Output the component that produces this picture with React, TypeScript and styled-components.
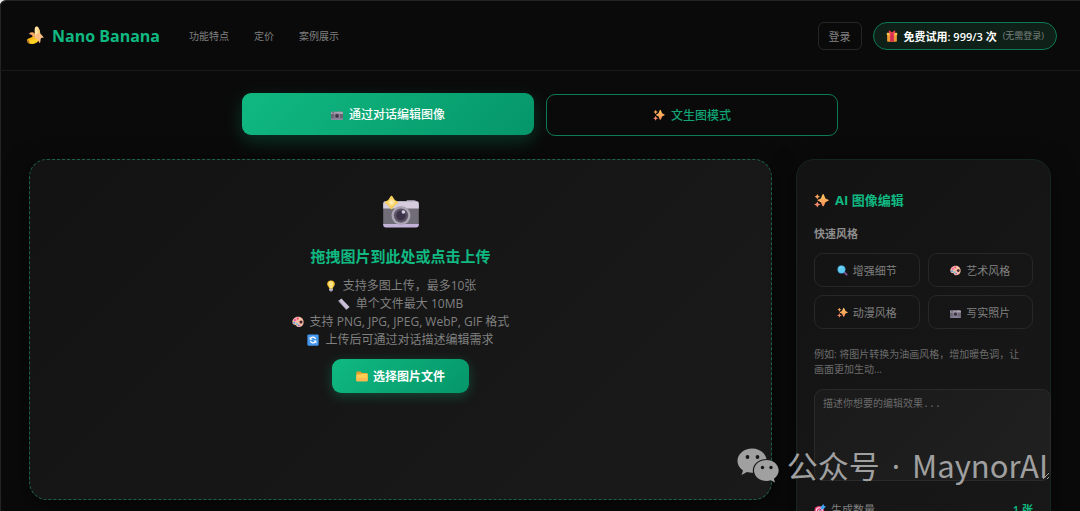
import React from "react";
import styled, { createGlobalStyle, css } from "styled-components";

const Global = createGlobalStyle`
  * { box-sizing: border-box; }
  html { background: #e8e8e8; }
  body { margin: 0; }
  body, button { font-family: "Open Sans", "Noto Sans CJK SC", sans-serif; }
  h1, h2, h3, p, ul { margin: 0; padding: 0; }
`;

const Shell = styled.div`
  position: relative;
  height: 100vh;
  overflow: hidden;
  background: #0a0a0a;
  border-top: 1px solid #242424;
  box-shadow: inset 1px 0 #242424;
  border-top-left-radius: 6px;
  color: #808080;
`;

const Header = styled.header`
  display: flex;
  align-items: center;
  justify-content: space-between;
  height: 70px;
  padding: 0 23px 0 26px;
  border-bottom: 1px solid #1a1a1a;
`;

const HeaderGroup = styled.div<{ $gap: number }>`
  display: flex;
  align-items: center;
  gap: ${(p) => p.$gap}px;
`;

const Logo = styled.h1`
  display: flex;
  align-items: center;
  gap: 7px;
  font-size: 16px;
  line-height: 24px;
  font-weight: 700;
  color: #10b981;
`;

const Nav = styled.nav`
  display: flex;
  gap: 25px;
`;

const NavLink = styled.a`
  font-size: 10px;
  line-height: 16px;
  color: #808080;
  text-decoration: none;
`;

const LoginButton = styled.button`
  height: 28px;
  padding: 0 10px;
  border: 1px solid #262626;
  border-radius: 6px;
  background: transparent;
  color: #808080;
  font-size: 11px;
`;

const TrialBadge = styled.div`
  display: flex;
  align-items: center;
  gap: 6px;
  height: 28px;
  padding: 0 12px;
  border: 1px solid #0d7a57;
  border-radius: 14px;
  background: #0e2018;
  color: #fff;
  font-size: 11px;
  font-weight: 600;
`;

const TrialNote = styled.span`
  font-size: 9px;
  font-weight: 400;
  color: #7a807d;
`;

const ModeSwitch = styled.div`
  display: grid;
  grid-template-columns: 1fr 1fr;
  gap: 12px;
  max-width: 596px;
  margin: 23px auto 0;
`;

const greenFill = css`
  background: linear-gradient(135deg, #10b981, #059669);
  color: #fff;
  border: 0;
`;

const ModeButton = styled.button<{ $active?: boolean }>`
  display: flex;
  align-items: center;
  justify-content: center;
  gap: 6px;
  height: 42px;
  border-radius: 9px;
  border: 1px solid #0d7a57;
  background: transparent;
  color: #10a574;
  font-size: 12px;
  font-weight: 500;
  ${(p) =>
    p.$active &&
    css`
      ${greenFill}
      transform: translateY(-1px);
      box-shadow: 0 6px 18px rgba(16, 185, 129, 0.25);
    `}
`;

const Main = styled.main`
  display: grid;
  grid-template-columns: minmax(0, 1fr) 255px;
  align-items: start;
  gap: 24px;
  padding: 23px 29px 0;
`;

const UploadPanel = styled.section`
  display: flex;
  flex-direction: column;
  align-items: center;
  min-height: 341px;
  padding: 33px 24px;
  border: 1px dashed #1a6148;
  border-radius: 18px;
  background: linear-gradient(135deg, #131313, #1a1a1a);
  box-shadow: 0 6px 24px rgba(0, 0, 0, 0.5);
`;

const UploadTitle = styled.h2`
  margin-top: 15px;
  font-size: 15px;
  line-height: 20px;
  font-weight: 600;
  color: #10b981;
`;

const Tips = styled.ul`
  margin-top: 11px;
  list-style: none;
  font-size: 12px;
  line-height: 18px;
`;

const Tip = styled.li`
  display: flex;
  align-items: center;
  justify-content: center;
  gap: 6px;
`;

const PickButton = styled.button`
  ${greenFill}
  display: flex;
  align-items: center;
  gap: 5px;
  height: 34px;
  margin-top: 10px;
  padding: 0 24px;
  border-radius: 9px;
  font-size: 12px;
  font-weight: 600;
  box-shadow: 0 3px 12px rgba(16, 185, 129, 0.3);
`;

const Sidebar = styled.aside`
  padding: 30px 17px;
  border: 1px solid #14261f;
  border-radius: 18px;
  background: linear-gradient(135deg, #131313, #181818);
  box-shadow: 0 6px 24px rgba(0, 0, 0, 0.5);
`;

const SideTitle = styled.h2`
  display: flex;
  align-items: center;
  gap: 6px;
  font-size: 13px;
  line-height: 20px;
  font-weight: 700;
  color: #10b981;
`;

const SideLabel = styled.h3`
  margin-top: 16px;
  font-size: 11px;
  line-height: 16px;
  font-weight: 600;
  color: #8c8c8c;
`;

const StyleGrid = styled.div`
  display: grid;
  grid-template-columns: 1fr 1fr;
  gap: 8px;
  margin-top: 11px;
`;

const StyleButton = styled.button`
  display: flex;
  align-items: center;
  justify-content: center;
  gap: 5px;
  height: 34px;
  border: 1px solid #272727;
  border-radius: 9px;
  background: transparent;
  color: #808080;
  font-size: 11px;
`;

const Hint = styled.p`
  margin-top: 18px;
  padding-right: 8px;
  font-size: 10px;
  line-height: 15px;
  color: #6c6c6c;
`;

const Prompt = styled.textarea`
  display: block;
  width: calc(100% + 18px);
  height: 92px;
  margin-top: 12px;
  padding: 8px;
  border: 1px solid #2a2a2a;
  border-radius: 9px;
  background: linear-gradient(135deg, #1a1a1a, #202020);
  color: #ccc;
  font-family: "Liberation Mono", "Noto Sans CJK SC", monospace;
  font-size: 10px;
  line-height: 14px;
  &::placeholder { color: #6a6a6a; }
`;

const CountRow = styled.div`
  display: flex;
  align-items: center;
  justify-content: space-between;
  margin-top: 21px;
  font-size: 11px;
  line-height: 16px;
`;

const CountName = styled.span`
  display: flex;
  align-items: center;
  gap: 5px;
`;

const CountValue = styled.strong`
  font-weight: 600;
  color: #10b981;
`;

const Watermark = styled.div`
  position: absolute;
  right: 32px;
  bottom: 21px;
  display: flex;
  align-items: center;
  gap: 8px;
  color: #a0a0a0;
  font-family: "Noto Sans CJK SC", sans-serif;
  font-size: 31px;
  line-height: 48px;
  white-space: nowrap;
  pointer-events: none;
`;

const Dot = styled.span`
  padding: 0 5px;
  font-family: "Noto Sans", sans-serif;
`;

type IconProps = { size: number };

const Svg = ({ size, children }: IconProps & { children: React.ReactNode }) => (
  <svg width={size} height={size} viewBox="0 0 32 32" aria-hidden="true">
    {children}
  </svg>
);

const Banana = ({ size }: IconProps) => (
  <Svg size={size}>
    <path d="M15 12C14 17 9 19 4 21c-3 1-3 6 0 8 6 3 16 1 20-9z" fill="#f9b917" />
    <path d="M4 24c7 1 13-1 17-7l2 4C19 29 10 31 4 28z" fill="#ffd226" />
    <path d="M2 25l3-1 1 4-3 0z" fill="#a4632e" />
    <path d="M15 3c1-3 5-3 6 0 3 5 4 12 2 17l-8-3c0-5-1-9 0-14z" fill="#ffe2a0" />
    <path d="M20 2c4 4 5 12 3 18l-4-3c1-5 2-10 1-15z" fill="#f6c878" />
    <path d="M15 13c-4-4-9-3-10 1 4-1 6 3 9 6z" fill="#f5a867" />
    <path d="M21 12c4 0 7 4 9 8-3 0-4-1-5 1s0 6-2 8c-2-3-2-7-8-8-1-4 2-8 6-9z" fill="#f9bd83" />
  </Svg>
);

const Gift = ({ size }: IconProps) => (
  <Svg size={size}>
    <path d="M10 8C5 5 7 0 11 2l5 5 5-5c4-2 6 3 1 6z" fill="#e5344f" />
    <rect x="3" y="8" width="26" height="23" rx="2" fill="#ed9b35" />
    <rect x="2" y="7" width="28" height="7" rx="2" fill="#ffc54a" />
    <rect x="11" y="7" width="10" height="24" fill="#d62d55" />
    <path d="M8 6l7 2-4 7zM24 6l-7 2 4 7z" fill="#f34855" />
  </Svg>
);

const CameraBody = () => (
  <>
    <path d="M21 6h6a2 2 0 012 2H20z" fill="#b9b2c4" />
    <rect x="1" y="7" width="30" height="21" rx="2" fill="#706c78" />
    <path d="M3 7h26a2 2 0 012 2v4H1V9a2 2 0 012-2z" fill="#d5cddd" />
    <path d="M1 26h30v1a2 2 0 01-2 2H3a2 2 0 01-2-2z" fill="#c4b2d8" />
    <circle cx="16" cy="19" r="8" fill="#aaa4b3" />
    <circle cx="16" cy="19" r="6" fill="#5c5366" />
    <circle cx="16" cy="19" r="4" fill="#3d3349" />
    <circle cx="18" cy="16" r="1.5" fill="#d8d2e4" />
  </>
);

const Camera = ({ size }: IconProps) => (
  <Svg size={size}>
    <path d="M20 9h8v3h-8z" fill="#8e8799" />
    <rect x="0" y="10" width="32" height="21" rx="2" fill="#6b6673" />
    <path d="M2 10h28a2 2 0 012 2v4H0v-4a2 2 0 012-2z" fill="#a9a2b3" />
    <path d="M0 28h32v1a2 2 0 01-2 2H2a2 2 0 01-2-2z" fill="#9c8fae" />
    <circle cx="16" cy="21" r="8" fill="#8d8698" />
    <circle cx="16" cy="21" r="5" fill="#3d3349" />
    <rect x="3" y="11" width="6" height="3" rx="1" fill="#625b6c" />
  </Svg>
);

const FlashCamera = ({ size }: IconProps) => (
  <Svg size={size}>
    <defs>
      <radialGradient id="flash">
        <stop offset="0" stopColor="#fff5cf" />
        <stop offset="1" stopColor="#f8ca4b" />
      </radialGradient>
    </defs>
    <CameraBody />
    <path
      d="M8 3Q9.500 6.500 13 8 9.500 9.500 8 13 6.500 9.500 3 8 6.500 6.500 8 3z"
      fill="url(#flash)"
      stroke="#f8cf5c"
      strokeWidth="1.500"
      strokeLinejoin="round"
    />
    <path d="M8 4l4 4-4 4-4-4z" fill="url(#flash)" />
  </Svg>
);

const Sparkles = ({ size }: IconProps) => (
  <Svg size={size}>
    <defs>
      <linearGradient id="spark" x1="0" y1="0" x2="0" y2="1">
        <stop offset="0" stopColor="#ffc95a" />
        <stop offset="1" stopColor="#f98c5c" />
      </linearGradient>
    </defs>
    <path d="M19.500 2q1.200 0 1.800 2l2.700 6.500q.4 1 1.500 1.500l5 2.500q2 1 0 2l-5 2.500q-1.100.5-1.500 1.500l-2.700 6.500q-1.800 3-3.600 0l-2.700-6.500q-.4-1-1.500-1.500l-5-2.500q-2-1 0-2l5-2.500q1.100-.5 1.500-1.500l2.700-6.500Q18.300 2 19.500 2z" fill="url(#spark)" />
    <path d="M7 2l2 4 4 1.800-4 2L7 14 5 9.800 1 7.800 5 6z" fill="#f9a35c" />
    <path d="M7 18l2.200 4.500L14 24.500l-4.800 2L7 31l-2.200-4.500L0 24.500l4.800-2z" fill="#f58a68" />
  </Svg>
);

const Bulb = ({ size }: IconProps) => (
  <Svg size={size}>
    <path d="M16 1C9 1 5 6 6 12c1 5 5 6 5 11h10c0-5 4-6 5-11C27 6 23 1 16 1z" fill="#ffc83b" />
    <path d="M15 4C11 4 9 8 10 12s4 6 4 10h4c0-6 4-8 3-13-1-3-3-5-6-5z" fill="#ffe58a" />
    <path d="M11 23h10v5q-5 6-10 0z" fill="#a49bad" />
    <path d="M11 25h10" stroke="#d9d2e2" strokeWidth="2" />
  </Svg>
);

const Ruler = ({ size }: IconProps) => (
  <Svg size={size}>
    <path d="M9 1L1 8l21 23 9-7z" fill="#cbc2d8" />
    <path d="M1 8l21 23v-2L2 6z" fill="#8e849e" />
    <path d="M11 4L9 6M15 8l-3 3M19 12l-2 2M23 17l-3 3M27 21l-2 2" stroke="#a79db6" strokeWidth="1" />
  </Svg>
);

const Palette = ({ size }: IconProps) => (
  <Svg size={size}>
    <path d="M16 2C7 2 1 9 1 16c0 6 4 8 8 8 3 0 2 2 4 4 3 3 18 3 18-12C31 8 25 2 16 2z" fill="#f7b9a4" />
    <ellipse cx="24" cy="16" rx="4" ry="4" fill="#3c2426" />
    <circle cx="15" cy="7" r="2.800" fill="#f0447a" />
    <circle cx="8" cy="11" r="2.800" fill="#f04fb0" />
    <circle cx="6" cy="18" r="2.500" fill="#3c9be9" />
    <circle cx="13" cy="21" r="2.500" fill="#49c6dd" />
    <circle cx="18" cy="25" r="2.500" fill="#8b6be0" />
    <circle cx="22" cy="8" r="2" fill="#ffdf91" />
  </Svg>
);

const Refresh = ({ size }: IconProps) => (
  <Svg size={size}>
    <rect x="1" y="1" width="30" height="30" rx="3" fill="#4597ee" />
    <g fill="none" stroke="#fff" strokeWidth="3">
      <path d="M23 13c-3-6-10-6-13-2M9 19c3 6 10 6 13 2" />
    </g>
    <path d="M7 7v8h8zM25 25v-8h-8z" fill="#fff" />
  </Svg>
);

const Folder = ({ size }: IconProps) => (
  <Svg size={size}>
    <path d="M1 6a2 2 0 012-2h9l4 4h13a2 2 0 012 2v17H1z" fill="#e9a02c" />
    <path d="M1 12l12-1 3-1h15v18a2 2 0 01-2 2H3a2 2 0 01-2-2z" fill="#ffce52" />
    <path d="M1 21h30v7a2 2 0 01-2 2H3a2 2 0 01-2-2z" fill="#fcb952" />
  </Svg>
);

const Magnifier = ({ size }: IconProps) => (
  <Svg size={size}>
    <path d="M20 20l8 8" stroke="#7f4b8f" strokeWidth="6" strokeLinecap="round" />
    <circle cx="13" cy="13" r="12" fill="#3a93c4" />
    <circle cx="13" cy="13" r="10" fill="#5ecbf3" />
    <path d="M7 10q3-5 8-4" stroke="#9ee5fb" strokeWidth="2" fill="none" />
  </Svg>
);

const Target = ({ size }: IconProps) => (
  <Svg size={size}>
    <circle cx="14" cy="18" r="13" fill="#e93e70" />
    <circle cx="14" cy="18" r="9.500" fill="#f6dce8" />
    <circle cx="14" cy="18" r="6.500" fill="#e93e70" />
    <circle cx="14" cy="18" r="3" fill="#f6dce8" />
    <path d="M14 18L24 8" stroke="#35529b" strokeWidth="2" />
    <path d="M18 8l7-8 2 5 5 1-7 8h-7z" fill="#3fa4f0" />
  </Svg>
);

const WeChat = () => (
  <svg width="42" height="35" viewBox="0 0 42 35" aria-hidden="true">
    <path d="M15 .5C7 .5.500 6 .500 13c0 4 2 7 5.500 9.500L4.500 27l5.500-3c2 .6 4 .9 6 .8C14.500 17 21 11 29.500 11 28 4.500 22 .500 15 .500z" fill="currentColor" />
    <path d="M29.500 12C22.500 12 17 16.700 17 22.500S22.500 33 29.500 33c1.600 0 3-.2 4.400-.7l4.100 2.200-1.100-3.800c3-2 4.800-5 4.800-8.200C41.700 16.700 36.500 12 29.500 12z" fill="currentColor" />
    <g fill="#171717">
      <circle cx="10.500" cy="9" r="1.900" />
      <circle cx="20.500" cy="9" r="1.900" />
      <circle cx="25.500" cy="19.500" r="1.700" />
      <circle cx="34" cy="19.500" r="1.700" />
    </g>
  </svg>
);

const tips = [
  { Icon: Bulb, text: "支持多图上传，最多10张" },
  { Icon: Ruler, text: "单个文件最大 10MB" },
  { Icon: Palette, text: "支持 PNG, JPG, JPEG, WebP, GIF 格式" },
  { Icon: Refresh, text: "上传后可通过对话描述编辑需求" },
];

const quickStyles = [
  { Icon: Magnifier, text: "增强细节" },
  { Icon: Palette, text: "艺术风格" },
  { Icon: Sparkles, text: "动漫风格" },
  { Icon: Camera, text: "写实照片" },
];

export default function App() {
  return (
    <>
      <Global />
      <Shell>
        <Header>
          <HeaderGroup $gap={29}>
            <Logo>
              <Banana size={19} />
              Nano Banana
            </Logo>
            <Nav>
              <NavLink href="#features">功能特点</NavLink>
              <NavLink href="#pricing">定价</NavLink>
              <NavLink href="#cases">案例展示</NavLink>
            </Nav>
          </HeaderGroup>
          <HeaderGroup $gap={11}>
            <LoginButton type="button">登录</LoginButton>
            <TrialBadge>
              <Gift size={12} />
              <span>免费试用: 999/3 次</span>
              <TrialNote>(无需登录)</TrialNote>
            </TrialBadge>
          </HeaderGroup>
        </Header>

        <ModeSwitch>
          <ModeButton type="button" $active>
            <Camera size={12} />
            通过对话编辑图像
          </ModeButton>
          <ModeButton type="button">
            <Sparkles size={12} />
            文生图模式
          </ModeButton>
        </ModeSwitch>

        <Main>
          <UploadPanel>
            <FlashCamera size={38} />
            <UploadTitle>拖拽图片到此处或点击上传</UploadTitle>
            <Tips>
              {tips.map(({ Icon, text }) => (
                <Tip key={text}>
                  <Icon size={12} />
                  {text}
                </Tip>
              ))}
            </Tips>
            <PickButton type="button">
              <Folder size={12} />
              选择图片文件
            </PickButton>
          </UploadPanel>

          <Sidebar>
            <SideTitle>
              <Sparkles size={15} />
              AI 图像编辑
            </SideTitle>
            <SideLabel>快速风格</SideLabel>
            <StyleGrid>
              {quickStyles.map(({ Icon, text }) => (
                <StyleButton type="button" key={text}>
                  <Icon size={11} />
                  {text}
                </StyleButton>
              ))}
            </StyleGrid>
            <Hint>例如: 将图片转换为油画风格，增加暖色调，让画面更加生动...</Hint>
            <Prompt aria-label="编辑效果" placeholder="描述你想要的编辑效果..." />
            <CountRow>
              <CountName>
                <Target size={12} />
                生成数量
              </CountName>
              <CountValue>1 张</CountValue>
            </CountRow>
          </Sidebar>
        </Main>

        <Watermark>
          <WeChat />
          <span>
            公众号 <Dot>·</Dot> MaynorAI
          </span>
        </Watermark>
      </Shell>
    </>
  );
}
